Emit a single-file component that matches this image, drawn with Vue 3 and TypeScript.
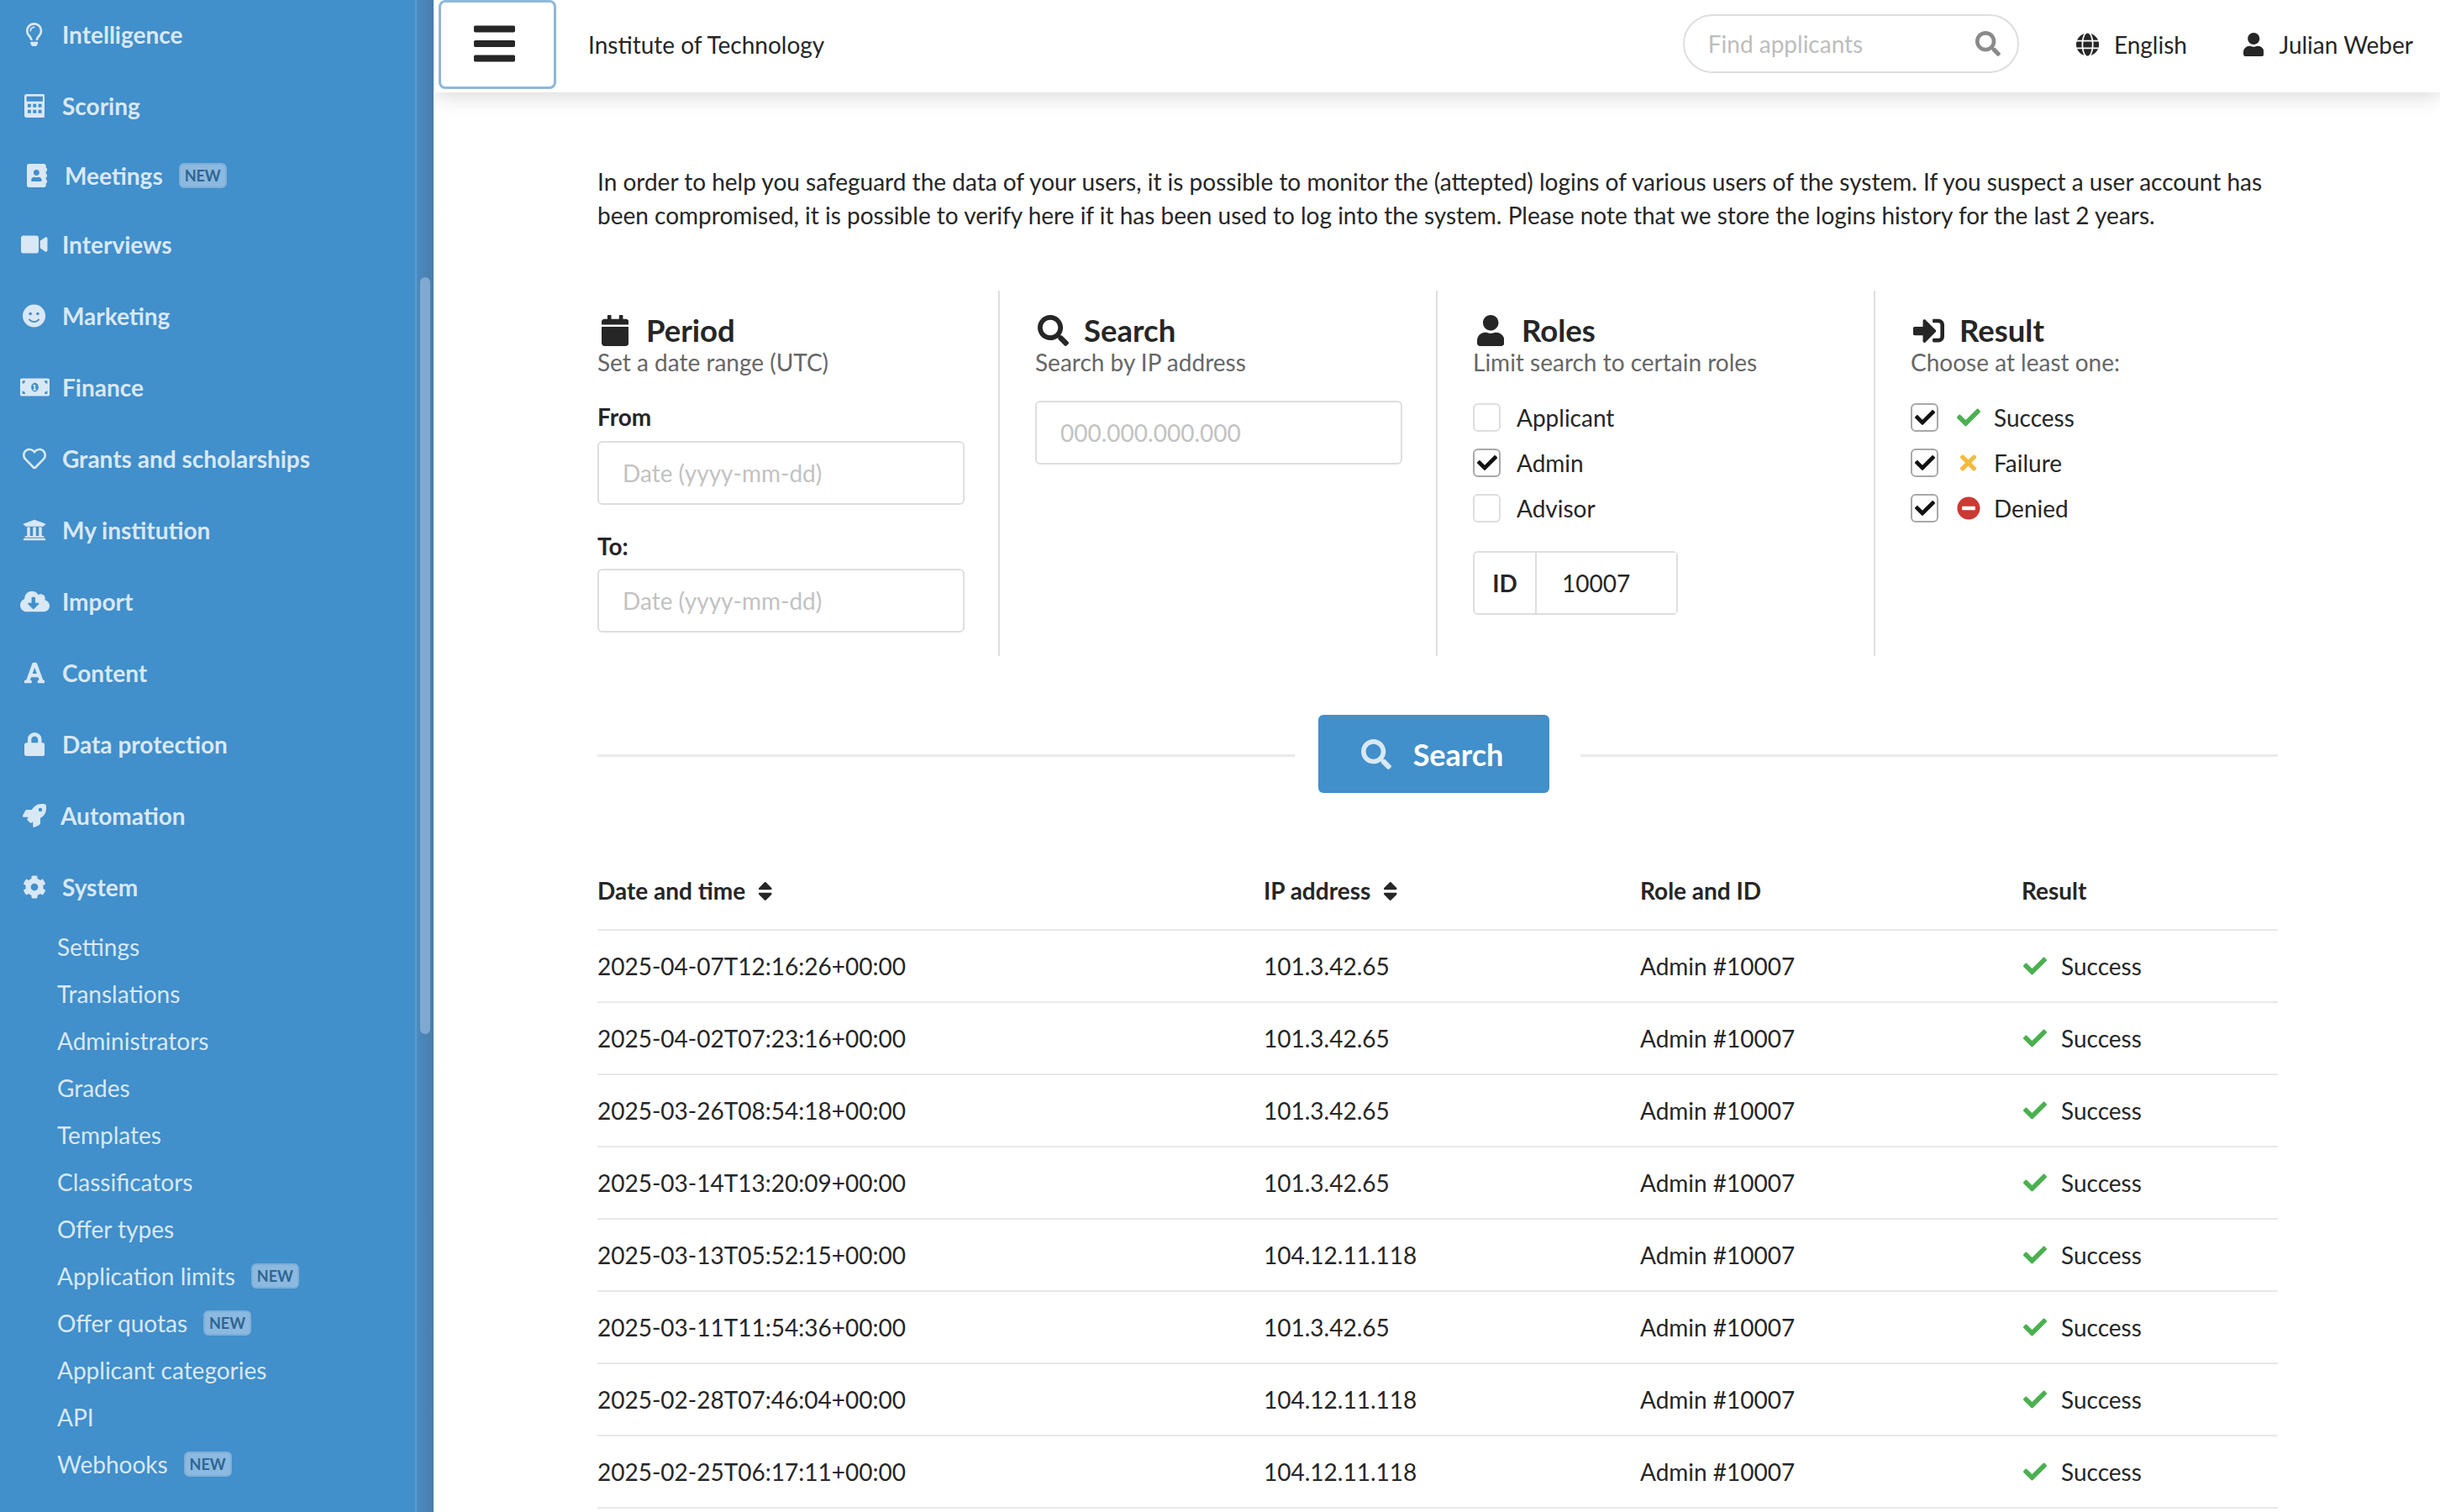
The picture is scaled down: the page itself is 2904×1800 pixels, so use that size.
<script setup lang="ts">
interface Icon { vb: string; d: string }

const icons: Record<string, Icon> = {
  bulb: { vb: '0 0 352 512', d: 'M176 80c-52.94 0-96 43.06-96 96 0 8.84 7.16 16 16 16s16-7.16 16-16c0-35.3 28.72-64 64-64 8.84 0 16-7.16 16-16s-7.16-16-16-16zM96.06 459.17c0 3.15.93 6.22 2.68 8.84l24.51 36.84c2.97 4.46 7.97 7.14 13.32 7.14h78.85c5.36 0 10.36-2.68 13.32-7.14l24.51-36.84c1.74-2.62 2.67-5.7 2.68-8.84l.05-43.18H96.02l.04 43.18zM176 0C73.72 0 0 82.97 0 176c0 44.37 16.45 84.85 43.56 115.78 16.64 18.99 42.74 58.8 52.42 92.16v.06h48v-.12c-.01-4.77-.72-9.51-2.15-14.07-5.59-17.81-22.82-64.77-62.17-109.67-20.54-23.43-31.52-53.15-31.61-84.14-.2-73.64 59.67-128 127.95-128 70.58 0 128 57.42 128 128 0 30.97-11.24 60.85-31.65 84.14-39.11 44.61-56.42 91.47-62.1 109.46a47.507 47.507 0 0 0-2.22 14.3v.1h48v-.05c9.68-33.37 35.78-73.18 52.42-92.16C335.55 260.85 352 220.37 352 176 352 78.8 273.2 0 176 0z' },
  calc: { vb: '0 0 448 512', d: 'M48 0h352c26.5 0 48 21.5 48 48v416c0 25.6-21.5 48-48 48H48c-26.5 0-48-21.5-48-48V48C0 21.5 21.5 0 48 0zM48 48v112h352V48H48zM72 216v72h72v-72H72zm116 0v72h72v-72h-72zm116 0v72h72v-72h-72zM72 344v72h72v-72H72zm116 0v72h72v-72h-72zm116 0v72h72v-72h-72z' },
  book: { vb: '0 0 448 512', d: 'M436 160c6.6 0 12-5.4 12-12v-40c0-6.6-5.4-12-12-12h-20V48c0-26.5-21.5-48-48-48H48C21.5 0 0 21.5 0 48v416c0 26.5 21.5 48 48 48h320c26.5 0 48-21.5 48-48v-48h20c6.6 0 12-5.4 12-12v-40c0-6.6-5.4-12-12-12h-20v-64h20c6.6 0 12-5.4 12-12v-40c0-6.6-5.4-12-12-12h-20v-64h20zm-228-32c35.3 0 64 28.7 64 64s-28.7 64-64 64-64-28.7-64-64 28.7-64 64-64zm112 236.8c0 10.6-10 19.2-22.4 19.2H118.4C106 384 96 375.4 96 364.8v-19.2c0-31.8 30.1-57.6 67.2-57.6h5c12.3 5.1 25.7 8 39.8 8s27.6-2.9 39.8-8h5c37.1 0 67.2 25.8 67.2 57.6v19.2z' },
  video: { vb: '0 0 576 512', d: 'M336.2 64H47.8C21.4 64 0 85.4 0 111.8v288.4C0 426.6 21.4 448 47.8 448h288.4c26.4 0 47.8-21.4 47.8-47.8V111.8c0-26.4-21.4-47.8-47.8-47.8zm189.4 37.7L416 177.3v157.4l109.6 75.5c21.2 14.6 50.4-.3 50.4-25.8V127.5c0-25.4-29.1-40.4-50.4-25.8z' },
  smile: { vb: '0 0 496 512', d: 'M248 8C111 8 0 119 0 256s111 248 248 248 248-111 248-248S385 8 248 8zm80 168c17.7 0 32 14.3 32 32s-14.3 32-32 32-32-14.3-32-32 14.3-32 32-32zm-160 0c17.7 0 32 14.3 32 32s-14.3 32-32 32-32-14.3-32-32 14.3-32 32-32zm194.8 170.2C334.3 380.4 292.5 400 248 400s-86.3-19.6-114.8-53.8c-13.6-16.3 11-36.7 24.6-20.5 22.4 26.9 55.2 42.2 90.2 42.2s67.8-15.4 90.2-42.2c13.4-16.2 38.1 4.2 24.6 20.5z' },
  money: { vb: '0 0 640 512', d: 'M608 64H32C14.33 64 0 78.33 0 96v320c0 17.67 14.33 32 32 32h576c17.67 0 32-14.33 32-32V96c0-17.67-14.33-32-32-32zM48 400v-64c35.35 0 64 28.65 64 64H48zm0-224v-64h64c0 35.35-28.65 64-64 64zm272 176c-44.19 0-80-42.99-80-96 0-53.02 35.82-96 80-96s80 42.98 80 96c0 53.03-35.83 96-80 96zm-8-150h-30v28h18v66h-18v28h68v-28h-18v-94h-20zm280 198h-64c0-35.35 28.65-64 64-64v64zm0-224c-35.35 0-64-28.65-64-64h64v64z' },
  heart: { vb: '0 0 512 512', d: 'M458.4 64.3C400.6 15.7 311.3 23 256 79.3 200.7 23 111.4 15.6 53.6 64.3-21.6 127.6-10.6 230.8 43 285.5l175.4 178.7c10 10.2 23.4 15.9 37.6 15.9 14.3 0 27.6-5.6 37.6-15.8L469 285.6c53.5-54.7 64.7-157.9-10.6-221.3zm-23.6 187.5L259.4 430.5c-2.4 2.4-4.4 2.4-6.8 0L77.2 251.8c-36.5-37.2-43.9-107.6 7.3-150.7 38.9-32.7 98.9-27.8 136.5 10.5l35 35.7 35-35.7c37.8-38.5 97.8-43.2 136.5-10.6 51.1 43.1 43.5 113.9 7.3 150.8z' },
  bank: { vb: '0 0 512 512', d: 'M496 128v16a8 8 0 0 1-8 8h-24v12c0 6.627-5.373 12-12 12H60c-6.627 0-12-5.373-12-12v-12H24a8 8 0 0 1-8-8v-16a8 8 0 0 1 4.941-7.392l232-88a7.996 7.996 0 0 1 6.118 0l232 88A8 8 0 0 1 496 128zm-24 304H40c-13.255 0-24 10.745-24 24v16a8 8 0 0 0 8 8h464a8 8 0 0 0 8-8v-16c0-13.255-10.745-24-24-24zM96 192v192H60c-6.627 0-12 5.373-12 12v20h416v-20c0-6.627-5.373-12-12-12h-36V192h-64v192h-64V192h-64v192h-64V192H96z' },
  cloud: { vb: '0 0 640 512', d: 'M537.6 226.6c4.1-10.7 6.4-22.4 6.4-34.6 0-53-43-96-96-96-19.7 0-38.1 6-53.3 16.2C367 64.2 315.3 32 256 32c-88.4 0-160 71.6-160 160 0 2.7.1 5.4.2 8.1C40.2 219.8 0 273.2 0 336c0 79.5 64.5 144 144 144h368c70.7 0 128-57.3 128-128 0-61.9-44-113.6-102.4-125.4zm-132.9 88.7L299.3 420.7c-6.2 6.2-16.4 6.2-22.6 0L171.3 315.3c-10.1-10.1-2.9-27.3 11.3-27.3H248V176c0-8.8 7.2-16 16-16h48c8.8 0 16 7.2 16 16v112h65.4c14.2 0 21.4 17.2 11.3 27.3z' },
  font: { vb: '0 0 448 512', d: 'M432 416h-23.41L277.88 53.69A32 32 0 0 0 247.58 32h-47.16a32 32 0 0 0-30.3 21.69L39.41 416H16a16 16 0 0 0-16 16v32a16 16 0 0 0 16 16h128a16 16 0 0 0 16-16v-32a16 16 0 0 0-16-16h-19.6l23.3-64h152.6l23.3 64H304a16 16 0 0 0-16 16v32a16 16 0 0 0 16 16h128a16 16 0 0 0 16-16v-32a16 16 0 0 0-16-16zM176.85 272L224 142.51 271.15 272z' },
  lock: { vb: '0 0 448 512', d: 'M400 224h-24v-72C376 68.2 307.8 0 224 0S72 68.2 72 152v72H48c-26.5 0-48 21.5-48 48v192c0 26.5 21.5 48 48 48h352c26.5 0 48-21.5 48-48V272c0-26.5-21.5-48-48-48zm-104 0H152v-72c0-39.7 32.3-72 72-72s72 32.3 72 72v72z' },
  rocket: { vb: '0 0 512 512', d: 'M505.12 19.09c-1.19-5.53-6.66-11-12.21-12.18C460.72 0 435.51 0 410.41 0 307.18 0 245.27 55.2 199.05 128H94.84c-16.35.02-35.56 11.88-42.89 26.48L2.52 253.3A28.4 28.4 0 0 0 0 264a24 24 0 0 0 24 24h103.81l-22.47 22.47c-11.37 11.36-13 32.26 0 45.25l50.9 50.9c11.16 11.19 32.16 13.16 45.28 0l22.48-22.47V488a24 24 0 0 0 24 24 28.56 28.56 0 0 0 10.71-2.52l98.73-49.39c14.63-7.3 26.5-26.5 26.5-42.86V312.8c72.6-46.31 128.04-108.41 128.04-211.1C512.08 76.5 512.08 51.3 505.12 19.09zM384.04 168a40 40 0 1 1 40.01-40 40.02 40.02 0 0 1-40.01 40z' },
  cog: { vb: '0 0 512 512', d: 'M487.4 315.7l-42.6-24.6c4.3-23.2 4.3-47 0-70.2l42.6-24.6c4.9-2.8 7.1-8.6 5.5-14-11.1-35.6-30-67.8-54.7-94.6-3.8-4.1-10-5.1-14.8-2.3L380.8 110c-17.9-15.4-38.5-27.3-60.8-35.1V25.8c0-5.6-3.9-10.5-9.4-11.7-36.7-8.2-74.3-7.8-109.2 0-5.5 1.2-9.4 6.1-9.4 11.7V75c-22.2 7.9-42.8 19.8-60.8 35.1L88.7 85.5c-4.9-2.8-11-1.9-14.8 2.3-24.7 26.7-43.6 58.9-54.7 94.6-1.7 5.4.6 11.2 5.5 14L67.3 221c-4.3 23.2-4.3 47 0 70.2l-42.6 24.6c-4.9 2.8-7.1 8.6-5.5 14 11.1 35.6 30 67.8 54.7 94.6 3.8 4.1 10 5.1 14.8 2.3l42.6-24.6c17.9 15.4 38.5 27.3 60.8 35.1v49.2c0 5.6 3.9 10.5 9.4 11.7 36.7 8.2 74.3 7.8 109.2 0 5.5-1.2 9.4-6.1 9.4-11.7v-49.2c22.2-7.9 42.8-19.8 60.8-35.1l42.6 24.6c4.9 2.8 11 1.9 14.8-2.3 24.7-26.7 43.6-58.9 54.7-94.6 1.5-5.5-.7-11.3-5.6-14.1zM256 336c-44.1 0-80-35.9-80-80s35.9-80 80-80 80 35.9 80 80-35.9 80-80 80z' },
  search: { vb: '0 0 512 512', d: 'M505 442.7L405.3 343c-4.5-4.5-10.6-7-17-7H372c27.6-35.3 44-79.7 44-128C416 93.1 322.9 0 208 0S0 93.1 0 208s93.1 208 208 208c48.3 0 92.7-16.4 128-44v16.3c0 6.4 2.5 12.5 7 17l99.7 99.7c9.4 9.4 24.6 9.4 33.9 0l28.3-28.3c9.4-9.4 9.4-24.6.1-34zM208 336c-70.7 0-128-57.2-128-128 0-70.7 57.2-128 128-128 70.7 0 128 57.2 128 128 0 70.7-57.2 128-128 128z' },
  user: { vb: '0 0 448 512', d: 'M224 256c70.7 0 128-57.3 128-128S294.7 0 224 0 96 57.3 96 128s57.3 128 128 128zm89.6 32h-16.7c-22.2 10.2-46.9 16-72.9 16s-50.6-5.8-72.9-16h-16.7C60.2 288 0 348.2 0 422.4V464c0 26.5 21.5 48 48 48h352c26.5 0 48-21.5 48-48v-41.6c0-74.2-60.2-134.4-134.4-134.4z' },
  calendar: { vb: '0 0 448 512', d: 'M12 192h424c6.6 0 12 5.4 12 12v260c0 26.5-21.5 48-48 48H48c-26.5 0-48-21.5-48-48V204c0-6.6 5.4-12 12-12zm436-44v-36c0-26.5-21.5-48-48-48h-48V12c0-6.6-5.4-12-12-12h-40c-6.6 0-12 5.4-12 12v52H160V12c0-6.6-5.4-12-12-12h-40c-6.6 0-12 5.4-12 12v52H48C21.5 64 0 85.5 0 112v36c0 6.6 5.4 12 12 12h424c6.6 0 12-5.4 12-12z' },
  signin: { vb: '0 0 512 512', d: 'M416 448h-84c-6.6 0-12-5.4-12-12v-40c0-6.6 5.4-12 12-12h84c17.7 0 32-14.3 32-32V160c0-17.7-14.3-32-32-32h-84c-6.6 0-12-5.4-12-12V76c0-6.6 5.4-12 12-12h84c53 0 96 43 96 96v192c0 53-43 96-96 96zm-47-201L201 79c-15-15-41-4.5-41 17v96H24c-13.3 0-24 10.7-24 24v96c0 13.3 10.7 24 24 24h136v96c0 21.5 26 32 41 17l168-168c9.3-9.4 9.3-24.6 0-34z' },
  check: { vb: '0 0 512 512', d: 'M173.898 439.404l-166.4-166.4c-9.997-9.997-9.997-26.206 0-36.204l36.203-36.204c9.997-9.998 26.207-9.998 36.204 0L192 312.69 432.095 72.596c9.997-9.997 26.207-9.997 36.204 0l36.203 36.204c9.997 9.997 9.997 26.206 0 36.204l-294.4 294.401c-9.998 9.997-26.207 9.997-36.204-.001z' },
  times: { vb: '0 0 352 512', d: 'M242.72 256l100.07-100.07c12.28-12.28 12.28-32.19 0-44.48l-22.24-22.24c-12.28-12.28-32.19-12.28-44.48 0L176 189.28 75.93 89.21c-12.28-12.28-32.19-12.28-44.48 0L9.21 111.45c-12.28 12.28-12.28 32.19 0 44.48L109.28 256 9.21 356.07c-12.28 12.28-12.28 32.19 0 44.48l22.24 22.24c12.28 12.28 32.2 12.28 44.48 0L176 322.72l100.07 100.07c12.28 12.28 32.2 12.28 44.48 0l22.24-22.24c12.28-12.28 12.28-32.19 0-44.48L242.72 256z' },
  minus: { vb: '0 0 512 512', d: 'M256 8C119 8 8 119 8 256s111 248 248 248 248-111 248-248S393 8 256 8zM124 296c-6.6 0-12-5.4-12-12v-56c0-6.6 5.4-12 12-12h264c6.6 0 12 5.4 12 12v56c0 6.6-5.4 12-12 12H124z' },
  bars: { vb: '0 0 448 512', d: 'M16 132h416c8.837 0 16-7.163 16-16V76c0-8.837-7.163-16-16-16H16C7.163 60 0 67.163 0 76v40c0 8.837 7.163 16 16 16zm0 160h416c8.837 0 16-7.163 16-16v-40c0-8.837-7.163-16-16-16H16c-8.837 0-16 7.163-16 16v40c0 8.837 7.163 16 16 16zm0 160h416c8.837 0 16-7.163 16-16v-40c0-8.837-7.163-16-16-16H16c-8.837 0-16 7.163-16 16v40c0 8.837 7.163 16 16 16z' },
  globe: { vb: '0 0 496 512', d: 'M336.5 160C322 70.7 287.8 8 248 8s-74 62.7-88.5 152h177zM152 256c0 22.2 1.2 43.5 3.3 64h185.3c2.1-20.5 3.3-41.8 3.3-64s-1.2-43.5-3.3-64H155.3c-2.1 20.5-3.3 41.8-3.3 64zm324.7-96c-28.6-67.9-86.5-120.4-158-141.6 24.4 33.8 41.2 84.7 50 141.6h108zM177.2 18.4C105.8 39.6 47.8 92.1 19.3 160h108c8.7-56.9 25.5-107.8 49.9-141.6zM487.4 192H372.7c2.1 21 3.3 42.5 3.3 64s-1.2 43-3.3 64h114.6c5.5-20.5 8.6-41.8 8.6-64s-3.1-43.5-8.5-64zM120 256c0-21.5 1.2-43 3.3-64H8.6C3.2 212.5 0 233.8 0 256s3.2 43.5 8.6 64h114.6c-2-21-3.2-42.5-3.2-64zm39.5 96c14.5 89.3 48.7 152 88.5 152s74-62.7 88.5-152h-177zm159.3 141.6c71.4-21.2 129.4-73.7 158-141.6h-108c-8.8 56.9-25.6 107.8-50 141.6zM19.3 352c28.6 67.9 86.5 120.4 158 141.6-24.4-33.8-41.2-84.7-50-141.6h-108z' },
  sort: { vb: '0 0 320 512', d: 'M41 288h238c21.4 0 32.1 25.9 17 41L177 448c-9.4 9.4-24.6 9.4-33.9 0L24 329c-15.1-15.1-4.4-41 17-41zm255-105L177 64c-9.4-9.4-24.6-9.4-33.9 0L24 183c-15.1 15.1-4.4 41 17 41h238c21.4 0 32.1-25.9 17-41z' },
}

const navItems = [
  { label: 'Intelligence', icon: 'bulb' },
  { label: 'Scoring', icon: 'calc' },
  { label: 'Meetings', icon: 'book', isNew: true, cls: 'meetings' },
  { label: 'Interviews', icon: 'video', cls: 'interviews' },
  { label: 'Marketing', icon: 'smile' },
  { label: 'Finance', icon: 'money' },
  { label: 'Grants and scholarships', icon: 'heart' },
  { label: 'My institution', icon: 'bank' },
  { label: 'Import', icon: 'cloud' },
  { label: 'Content', icon: 'font' },
  { label: 'Data protection', icon: 'lock' },
  { label: 'Automation', icon: 'rocket', cls: 'tucked' },
  { label: 'System', icon: 'cog' },
]

const subItems = [
  { label: 'Settings' },
  { label: 'Translations' },
  { label: 'Administrators' },
  { label: 'Grades' },
  { label: 'Templates' },
  { label: 'Classificators' },
  { label: 'Offer types' },
  { label: 'Application limits', isNew: true },
  { label: 'Offer quotas', isNew: true },
  { label: 'Applicant categories' },
  { label: 'API' },
  { label: 'Webhooks', isNew: true },
]

const roles = [
  { label: 'Applicant', checked: false },
  { label: 'Admin', checked: true },
  { label: 'Advisor', checked: false },
]

const results = [
  { label: 'Success', icon: 'check', cls: 'ok' },
  { label: 'Failure', icon: 'times', cls: 'warn' },
  { label: 'Denied', icon: 'minus', cls: 'bad' },
]

const logins = [
  ['2025-04-07T12:16:26+00:00', '101.3.42.65'],
  ['2025-04-02T07:23:16+00:00', '101.3.42.65'],
  ['2025-03-26T08:54:18+00:00', '101.3.42.65'],
  ['2025-03-14T13:20:09+00:00', '101.3.42.65'],
  ['2025-03-13T05:52:15+00:00', '104.12.11.118'],
  ['2025-03-11T11:54:36+00:00', '101.3.42.65'],
  ['2025-02-28T07:46:04+00:00', '104.12.11.118'],
  ['2025-02-25T06:17:11+00:00', '104.12.11.118'],
]
</script>

<template>
  <div class="layout">
    <aside class="sidebar">
      <nav class="nav">
        <a v-for="item in navItems" :key="item.label" class="nav-item" :class="item.cls">
          <span class="nav-icon">
            <svg :viewBox="icons[item.icon].vb"><path :d="icons[item.icon].d" /></svg>
          </span>
          <span>{{ item.label }}</span>
          <span v-if="item.isNew" class="tag">NEW</span>
        </a>
        <a v-for="item in subItems" :key="item.label" class="sub-item">
          <span>{{ item.label }}</span>
          <span v-if="item.isNew" class="tag">NEW</span>
        </a>
      </nav>
      <div class="gutter"><div class="thumb"></div></div>
    </aside>

    <div class="page">
      <header class="topbar">
        <button class="menu-btn">
          <svg :viewBox="icons.bars.vb"><path :d="icons.bars.d" /></svg>
        </button>
        <span class="school">Institute of Technology</span>
        <div class="find">
          <input class="find-input" placeholder="Find applicants" />
          <svg :viewBox="icons.search.vb"><path :d="icons.search.d" /></svg>
        </div>
        <span class="top-link lang">
          <svg :viewBox="icons.globe.vb"><path :d="icons.globe.d" /></svg>English
        </span>
        <span class="top-link account">
          <svg :viewBox="icons.user.vb"><path :d="icons.user.d" /></svg>Julian Weber
        </span>
      </header>

      <main class="content">
        <p class="intro">
          In order to help you safeguard the data of your users, it is possible to monitor the (attepted) logins of various users of the system. If you suspect a user account has been compromised, it is possible to verify here if it has been used to log into the system. Please note that we store the logins history for the last 2 years.
        </p>

        <section class="filters">
          <div class="filter">
            <h3 class="filter-title">
              <span class="title-icon"><svg :viewBox="icons.calendar.vb"><path :d="icons.calendar.d" /></svg></span>Period
            </h3>
            <p class="filter-sub">Set a date range (UTC)</p>
            <label class="field-label first">From</label>
            <input class="field" placeholder="Date (yyyy-mm-dd)" />
            <label class="field-label second">To:</label>
            <input class="field" placeholder="Date (yyyy-mm-dd)" />
          </div>

          <div class="filter">
            <h3 class="filter-title">
              <span class="title-icon"><svg :viewBox="icons.search.vb"><path :d="icons.search.d" /></svg></span>Search
            </h3>
            <p class="filter-sub">Search by IP address</p>
            <input class="field ip" placeholder="000.000.000.000" />
          </div>

          <div class="filter">
            <h3 class="filter-title">
              <span class="title-icon"><svg :viewBox="icons.user.vb"><path :d="icons.user.d" /></svg></span>Roles
            </h3>
            <p class="filter-sub">Limit search to certain roles</p>
            <div class="checks">
              <label v-for="role in roles" :key="role.label" class="check-row">
                <span class="box" :class="{ on: role.checked }">
                  <svg v-if="role.checked" :viewBox="icons.check.vb"><path :d="icons.check.d" /></svg>
                </span>
                {{ role.label }}
              </label>
            </div>
            <div class="id-group">
              <span class="id-label">ID</span>
              <input class="id-input" value="10007" />
            </div>
          </div>

          <div class="filter last">
            <h3 class="filter-title">
              <span class="title-icon"><svg :viewBox="icons.signin.vb"><path :d="icons.signin.d" /></svg></span>Result
            </h3>
            <p class="filter-sub">Choose at least one:</p>
            <div class="checks">
              <label v-for="res in results" :key="res.label" class="check-row">
                <span class="box on">
                  <svg :viewBox="icons.check.vb"><path :d="icons.check.d" /></svg>
                </span>
                <span class="res-icon" :class="res.cls">
                  <svg :viewBox="icons[res.icon].vb"><path :d="icons[res.icon].d" /></svg>
                </span>
                {{ res.label }}
              </label>
            </div>
          </div>
        </section>

        <div class="search-row">
          <span class="rule"></span>
          <button class="search-btn">
            <svg :viewBox="icons.search.vb"><path :d="icons.search.d" /></svg>
            <span>Search</span>
          </button>
          <span class="rule"></span>
        </div>

        <table class="logins">
          <colgroup>
            <col class="c-date" />
            <col class="c-ip" />
            <col class="c-role" />
            <col />
          </colgroup>
          <thead>
            <tr>
              <th>Date and time <svg class="sort" :viewBox="icons.sort.vb"><path :d="icons.sort.d" /></svg></th>
              <th>IP address <svg class="sort" :viewBox="icons.sort.vb"><path :d="icons.sort.d" /></svg></th>
              <th>Role and ID</th>
              <th>Result</th>
            </tr>
          </thead>
          <tbody>
            <tr v-for="row in logins" :key="row[0]">
              <td>{{ row[0] }}</td>
              <td>{{ row[1] }}</td>
              <td>Admin #10007</td>
              <td>
                <span class="outcome">
                  <svg :viewBox="icons.check.vb"><path :d="icons.check.d" /></svg>Success
                </span>
              </td>
            </tr>
          </tbody>
        </table>
      </main>
    </div>
  </div>
</template>

<style scoped>
.layout {
  display: flex;
  height: 1800px;
  overflow: hidden;
  font-family: Lato, "Open Sans", sans-serif;
  font-size: 28px;
  line-height: 40px;
  color: #262626;
  background: #fff;
}

/* Sidebar */
.sidebar {
  flex: 0 0 516px;
  display: flex;
  background: #418fcb;
  color: #d9e8f5;
}
.nav {
  flex: 1;
  margin-top: -2px;
}
.nav-item {
  display: flex;
  align-items: center;
  height: 85.1px;
  padding-left: 20px;
  font-weight: 700;
}
.nav-item.meetings { height: 81px; padding-left: 23px; }
.nav-item.interviews { height: 84px; }
.nav-item.tucked .nav-icon { margin-right: 10px; }
.nav-icon {
  flex: 0 0 42px;
  margin-right: 12px;
  display: flex;
  justify-content: center;
}
.nav-icon svg {
  height: 28px;
  fill: currentColor;
}
.sub-item {
  display: flex;
  align-items: center;
  height: 56px;
  padding-left: 68px;
}
.tag {
  margin-left: 19px;
  width: 57px;
  height: 30px;
  box-sizing: border-box;
  border: 2px solid #7eaed8;
  border-radius: 6px;
  background: #8cb9e0;
  color: #2f6592;
  font-size: 18px;
  font-weight: 700;
  line-height: 26px;
  text-align: center;
}
.gutter {
  position: relative;
  flex: 0 0 22px;
  box-sizing: border-box;
  border-left: 2px solid #5b9bd0;
  background: linear-gradient(to right, #4a8bc2, #4a7da8);
}
.thumb {
  position: absolute;
  top: 330px;
  left: 4px;
  width: 12px;
  height: 901px;
  border-radius: 6px;
  background: #7fa9d0;
}

/* Top bar */
.page {
  flex: 1;
  min-width: 0;
}
.topbar {
  display: flex;
  align-items: center;
  height: 110px;
  margin-left: 2px;
  background: #fff;
  box-shadow: 0 4px 24px rgba(0, 0, 0, 0.16);
}
.menu-btn {
  flex: 0 0 140px;
  height: 106px;
  margin: 0 38px 4px 4px;
  padding: 0 0 2px;
  background: #fff;
  border: 3px solid #8db7da;
  border-radius: 8px;
}
.menu-btn svg {
  display: block;
  height: 56px;
  margin: 0 auto 0 39px;
  fill: #262626;
}
.school {
  flex: 1;
  margin-bottom: 4px;
}
.find {
  display: flex;
  align-items: center;
  width: 400px;
  height: 70px;
  box-sizing: border-box;
  padding: 0 20px 0 28px;
  margin-bottom: 6px;
  border: 2px solid #dedede;
  border-radius: 35px;
}
.find svg {
  height: 30px;
  fill: #8a8a8a;
}
.find-input {
  flex: 1;
  min-width: 0;
  padding: 0;
  border: 0;
  outline: 0;
  font: inherit;
}
.find-input::placeholder { color: #bdbdbd; }
.top-link {
  display: flex;
  align-items: center;
  margin-bottom: 4px;
}
.top-link svg {
  height: 28px;
  margin-right: 18px;
  fill: #262626;
}
.lang { margin-left: 68px; }
.account { margin-left: 67px; margin-right: 32px; }

/* Content */
.content {
  padding: 86px 193px 0 195px;
}
.intro {
  margin: 0;
}
.filters {
  display: flex;
  height: 435px;
  margin: 70px 0 0 -42px;
}
.filter {
  flex: 0 0 521px;
  box-sizing: border-box;
  padding: 27px 40px 0 42px;
  border-right: 2px solid #dedede;
}
.filter.last { border-right: 0; }
.filter-title {
  display: flex;
  align-items: center;
  margin: 0;
  font-size: 36.5px;
  font-weight: 700;
  line-height: 40px;
}
.title-icon {
  flex: 0 0 42px;
  margin-right: 16px;
  display: flex;
  justify-content: center;
}
.title-icon svg {
  height: 37px;
  fill: #262626;
}
.filter-sub {
  margin: -2px 0 0;
  color: #666;
}
.field-label {
  display: block;
  font-weight: 700;
}
.field-label.first { margin: 25px 0 9px; }
.field-label.second { margin: 29px 0 7px; }
.field {
  display: block;
  width: 100%;
  height: 76px;
  box-sizing: border-box;
  padding: 0 28px;
  border: 2px solid #dedede;
  border-radius: 6px;
  outline: 0;
  font: inherit;
}
.field.ip { margin-top: 26px; }
.field::placeholder { color: #c2c2c2; }
.checks {
  display: flex;
  flex-direction: column;
  gap: 14px;
  margin-top: 26px;
}
.check-row {
  display: flex;
  align-items: center;
  height: 40px;
}
.box {
  flex: 0 0 33px;
  height: 34px;
  box-sizing: border-box;
  margin-right: 19px;
  display: flex;
  align-items: center;
  justify-content: center;
  border: 2px solid #dedede;
  border-radius: 6px;
}
.box.on { border-color: #a8a8a8; }
.box svg {
  flex: none;
  width: 24px;
  height: 24px;
  fill: #111;
}
.res-icon {
  flex: 0 0 28px;
  height: 28px;
  margin: 0 16px 0 3px;
  display: flex;
  justify-content: center;
}
.res-icon svg { height: 28px; }
.res-icon.ok svg { fill: #4bb050; }
.res-icon.warn svg { fill: #f2bb3d; }
.res-icon.bad svg { fill: #cb3a32; }
.id-group {
  display: flex;
  width: 244px;
  height: 76px;
  box-sizing: border-box;
  margin-top: 31px;
  border: 2px solid #dedede;
  border-radius: 6px;
}
.id-label {
  flex: 0 0 74px;
  box-sizing: border-box;
  border-right: 2px solid #dedede;
  font-weight: 700;
  line-height: 72px;
  text-align: center;
}
.id-input {
  flex: 1;
  min-width: 0;
  padding: 0 0 0 30px;
  border: 0;
  outline: 0;
  font: inherit;
  color: inherit;
}

/* Search button */
.search-row {
  display: flex;
  align-items: center;
  margin-top: 70px;
}
.rule {
  flex: 1;
  height: 3px;
  margin-top: 3px;
  background: #e9e9e9;
}
.search-btn {
  display: flex;
  align-items: center;
  justify-content: center;
  width: 275px;
  height: 93px;
  margin: 0 37px 0 28px;
  padding: 0 4px 0 0;
  border: 0;
  border-radius: 6px;
  background: #418fcb;
  color: #fff;
  font: inherit;
  font-size: 36px;
  font-weight: 700;
}
.search-btn svg {
  height: 36px;
  margin-right: 26px;
  fill: #d9e8f5;
}

/* Table */
.logins {
  width: 2000px;
  margin-top: 70px;
  border-collapse: collapse;
  table-layout: fixed;
}
.c-date { width: 793px; }
.c-ip { width: 448px; }
.c-role { width: 454px; }
.logins th {
  height: 92px;
  padding: 0;
  border-bottom: 2px solid #e8e8e8;
  font-weight: 700;
  text-align: left;
}
.logins td {
  height: 86px;
  box-sizing: border-box;
  padding: 0;
  border-bottom: 2px solid #e8e8e8;
}
.sort {
  height: 28px;
  margin-left: 8px;
  vertical-align: -4px;
  fill: #262626;
}
.outcome {
  display: flex;
  align-items: center;
  margin-left: 2px;
}
.outcome svg {
  width: 28px;
  height: 28px;
  margin-right: 17px;
  fill: #4bb050;
}
</style>

<style>
html, body {
  margin: 0;
  overflow: hidden;
}
</style>
